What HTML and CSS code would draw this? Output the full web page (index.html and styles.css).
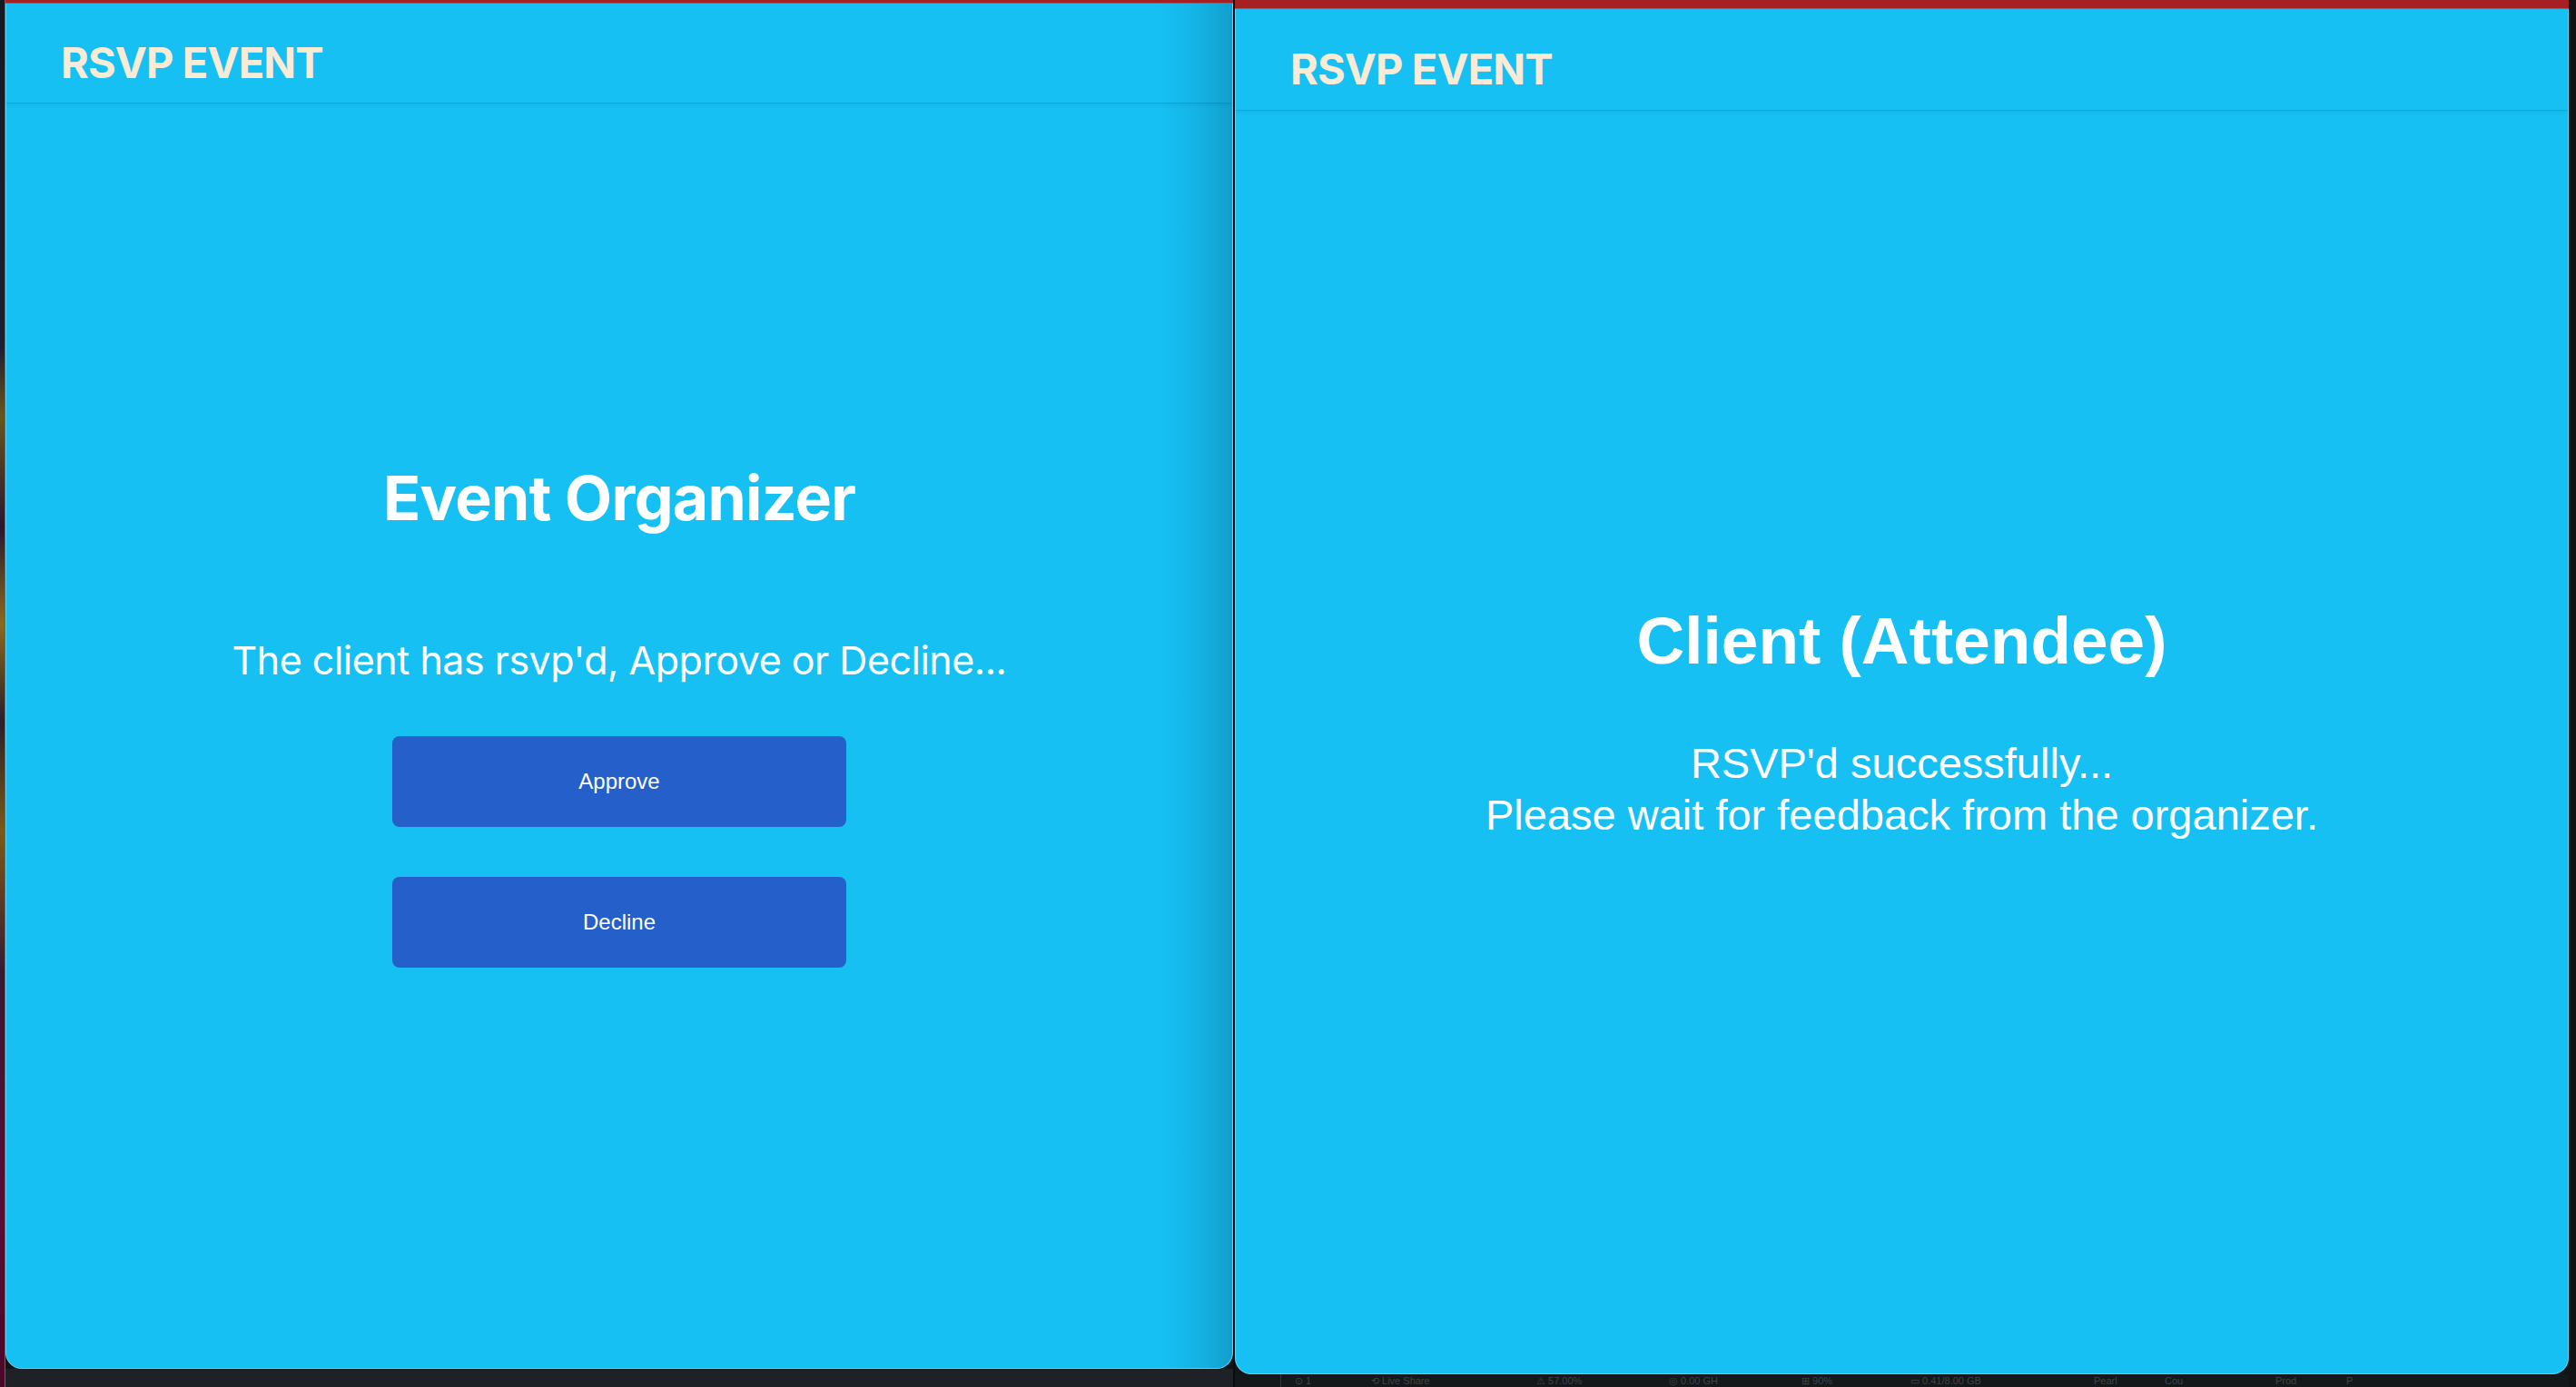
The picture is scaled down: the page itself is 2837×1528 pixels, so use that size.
FILE: index.html
```html
<!DOCTYPE html>
<html lang="en">
<head>
<meta charset="utf-8">
<title>RSVP EVENT</title>
<link rel="stylesheet" href="styles.css">
</head>
<body>
<div class="desk">
  <div class="wall"></div>

  <section class="col col-left">
    <div class="tabbar tabbar-left"></div>
    <div class="window win-left">
      <header class="appbar appbar-left"><span class="brand">RSVP EVENT</span></header>
      <main class="panel panel-left">
        <h1 class="title title-left">Event Organizer</h1>
        <p class="lead lead-left">The client has rsvp'd, Approve or Decline...</p>
        <div class="actions">
          <button class="btn">Approve</button>
          <button class="btn">Decline</button>
        </div>
      </main>
    </div>
    <div class="below below-left"></div>
  </section>

  <div class="split"></div>

  <section class="col col-right">
    <div class="tabbar tabbar-right"></div>
    <div class="window win-right">
      <header class="appbar appbar-right"><span class="brand">RSVP EVENT</span></header>
      <main class="panel panel-right">
        <h1 class="title title-right">Client (Attendee)</h1>
        <p class="lead lead-right">RSVP'd successfully...<br>Please wait for feedback from the organizer.</p>
      </main>
    </div>
    <div class="below below-right">
      <div class="status">
        <span class="sep"></span>
        <span class="s-item w1">⊙ 1</span>
        <span class="s-item w2">⟲ Live Share</span>
        <span class="s-item w3">⚠ 57.00%</span>
        <span class="s-item w3">◎ 0.00 GH</span>
        <span class="s-item w4">⊞ 90%</span>
        <span class="s-item w5">▭ 0.41/8.00 GB</span>
        <span class="s-item w6">Pearl</span>
        <span class="s-item w7">Cou</span>
        <span class="s-item w6">Prod</span>
        <span class="s-item">P</span>
      </div>
    </div>
  </section>

  <div class="edge"></div>
</div>
</body>
</html>
```

FILE: styles.css
```css
html, body {
  margin: 0;
  padding: 0;
  background: #121416;
}

.desk {
  width: 2837px;
  height: 1528px;
  display: flex;
  overflow: hidden;
  background: #121416;
}

.wall {
  width: 6px;
  flex: none;
  background: linear-gradient(180deg, #141a24 0%, #1b2030 25%, #6b5320 30%, #2a1830 38%, #8a6a1c 45%, #2a1f2a 52%, #7a5a18 60%, #3a1a32 70%, #5a0c34 88%, #4a0828 100%);
  box-shadow: inset -1px 0 0 #2e7a8c;
}

.col {
  flex: none;
  display: flex;
  flex-direction: column;
}

.col-left { width: 1352px; }
.col-right { width: 1469px; }

.tabbar {
  flex: none;
  background: #a61f23;
  border-bottom: 1px solid #c84a4b;
}
.tabbar-left { height: 3px; }
.tabbar-right { height: 9px; }

.window {
  flex: none;
  position: relative;
  height: 1504px;
  box-sizing: border-box;
  background: #16c0f3;
  border: 1px solid #5cd2f6;
  border-top: none;
  border-radius: 0 0 18px 18px;
  display: flex;
  flex-direction: column;
  overflow: hidden;
}

.win-left::after {
  content: "";
  position: absolute;
  top: 0;
  right: 0;
  bottom: 0;
  width: 80px;
  background: linear-gradient(90deg, rgba(0, 40, 70, 0) 0%, rgba(0, 40, 70, 0.08) 50%, rgba(0, 40, 70, 0.22) 100%);
  pointer-events: none;
}

.appbar {
  flex: none;
  box-sizing: border-box;
  box-shadow: 0 1px 0 rgba(0, 80, 120, 0.12), 0 2px 4px rgba(0, 60, 100, 0.12);
  position: relative;
  z-index: 1;
}
.appbar-left { height: 109px; padding: 36px 0 0 60px; }
.appbar-right { height: 111px; padding: 37px 0 0 60px; }

.brand {
  display: block;
  font-family: Inter, "Noto Sans", sans-serif;
  font-weight: 700;
  font-size: 47px;
  line-height: 58px;
  color: #faebd7;
  letter-spacing: -0.9px;
}

.panel {
  flex: 1;
  display: flex;
  flex-direction: column;
  align-items: center;
}
.panel-left { padding-top: 393px; }
.panel-right { padding-top: 541px; }

.title {
  margin: 0;
  color: #ffffff;
  font-weight: 700;
  white-space: nowrap;
}
.title-left {
  font-family: Inter, "Noto Sans", sans-serif;
  font-size: 68px;
  line-height: 84px;
  letter-spacing: -0.8px;
}
.title-right {
  font-family: "Liberation Sans", Arial, sans-serif;
  font-size: 73px;
  line-height: 88px;
}

.lead {
  margin: 0;
  color: #ffffff;
  text-align: center;
  white-space: nowrap;
}
.lead-left {
  margin-top: 111px;
  font-family: Inter, "Noto Sans", sans-serif;
  font-size: 43px;
  line-height: 53px;
  letter-spacing: -0.5px;
}
.lead-right {
  margin-top: 62px;
  font-family: "Liberation Sans", Arial, sans-serif;
  font-size: 47px;
  line-height: 57px;
}

.actions {
  margin-top: 57px;
  display: flex;
  flex-direction: column;
  gap: 55px;
}

.btn {
  width: 500px;
  height: 100px;
  border: none;
  border-radius: 8px;
  background: #255fc9;
  color: #ffffff;
  font-family: "Liberation Sans", Arial, sans-serif;
  font-size: 24px;
  padding: 0;
}

.below { flex: 1; }
.below-left { background: #1e2226; }
.below-right {
  background: #15181b;
  position: relative;
  overflow: hidden;
}

.status {
  display: flex;
  align-items: flex-start;
  padding: 1px 0 0 66px;
  font-family: "Liberation Sans", Arial, sans-serif;
  font-size: 11px;
  line-height: 12px;
  color: #3e4449;
  white-space: nowrap;
}
.s-item { flex: none; }
.w1 { width: 84px; }
.w2 { width: 182px; }
.w3 { width: 146px; }
.w4 { width: 120px; }
.w5 { width: 202px; }
.w6 { width: 78px; }
.w7 { width: 122px; }

.status .sep {
  position: absolute;
  left: 50px;
  top: 0;
  bottom: 0;
  width: 1px;
  background: #33383d;
}

.split {
  width: 2px;
  flex: none;
  background: #0b0c0d;
}

.edge {
  width: 8px;
  flex: none;
  background: #111214;
}
```
